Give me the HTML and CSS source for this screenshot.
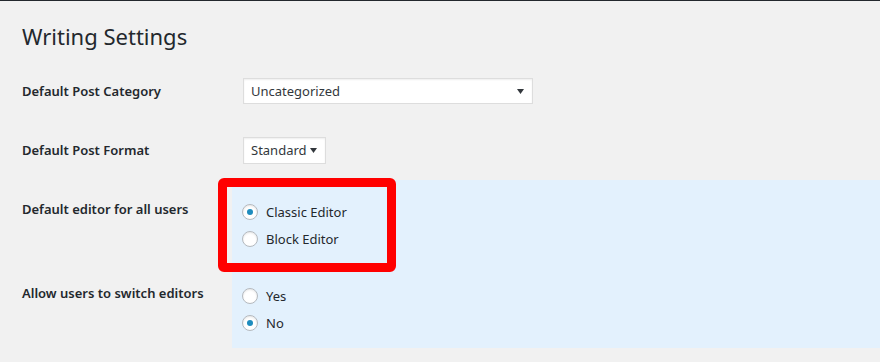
FILE: index.html
```html
<!DOCTYPE html>
<html lang="en">
<head>
  <meta charset="UTF-8">
  <title>Writing Settings</title>
  <link rel="stylesheet" href="styles.css">
</head>
<body>

  <div class="wrap">
    <h1>Writing Settings</h1>

    <div class="row row-category">
      <div class="label">Default Post Category</div>
      <div class="field">
        <div class="select select-wide">
          <span>Uncategorized</span>
          <svg class="arrow" width="7" height="5" viewBox="0 0 7 5"><path d="M0 0H7L3.5 5Z" fill="#32373c"/></svg>
        </div>
      </div>
    </div>

    <div class="row row-format">
      <div class="label">Default Post Format</div>
      <div class="field">
        <div class="select select-small">
          <span>Standard</span>
          <svg class="arrow" width="7" height="5" viewBox="0 0 7 5"><path d="M0 0H7L3.5 5Z" fill="#32373c"/></svg>
        </div>
      </div>
    </div>

    <div class="row row-editor">
      <div class="label">Default editor for all users</div>
      <div class="field highlight">
        <label class="option"><span class="radio checked"></span>Classic Editor</label>
        <label class="option"><span class="radio"></span>Block Editor</label>
        <div class="callout"></div>
      </div>
    </div>

    <div class="row row-switch">
      <div class="label">Allow users to switch editors</div>
      <div class="field highlight">
        <label class="option"><span class="radio"></span>Yes</label>
        <label class="option"><span class="radio checked"></span>No</label>
      </div>
    </div>
  </div>

</body>
</html>
```

FILE: styles.css
```css
body {
  margin: 0;
  background: #f1f1f1;
  border-top: 1px solid #23282d;
  color: #23282d;
  font-family: 'Noto Sans', 'Open Sans', sans-serif;
  font-size: 13px;
  height: 361px;
  overflow: hidden;
}

.wrap {
  padding-left: 22px;
}

h1 {
  margin: 0;
  padding: 21px 0 0;
  height: 40px;
  font-size: 22px;
  font-weight: 400;
  line-height: 29px;
}

.row {
  display: flex;
}

.label {
  width: 210px;
  flex-shrink: 0;
  font-weight: 600;
  line-height: 20px;
}

.field {
  flex: 1;
  padding-left: 10px;
}

.row-category {
  height: 58px;
  align-items: center;
}

.row-format {
  height: 60px;
  align-items: center;
}

.select {
  display: flex;
  align-items: center;
  justify-content: space-between;
  box-sizing: border-box;
  margin-left: 1px;
  background: #fff;
  border: 1px solid #ddd;
  box-shadow: inset 0 1px 2px rgba(0, 0, 0, 0.07);
  padding: 0 8px 0 7px;
  color: #32373c;
}

.select-wide {
  width: 290px;
  height: 26px;
}

.select-small {
  width: 83px;
  height: 27px;
}

.row-editor .label {
  padding-top: 19px;
}

.row-editor .field {
  padding-top: 18px;
  height: 90px;
  box-sizing: border-box;
  position: relative;
}

.row-switch .label {
  padding-top: 13px;
}

.row-switch .field {
  padding-top: 12px;
  height: 78px;
  box-sizing: border-box;
}

.highlight {
  background: #e3f1fd;
}

.option {
  display: flex;
  align-items: center;
  height: 27px;
  color: #23282d;
}

.radio {
  position: relative;
  width: 16px;
  height: 16px;
  box-sizing: border-box;
  border: 1px solid #b4b9be;
  border-radius: 50%;
  background: #fff;
  box-shadow: inset 0 1px 2px rgba(0, 0, 0, 0.1);
  margin-right: 8px;
}

.radio.checked::after {
  content: "";
  position: absolute;
  left: 4px;
  top: 4px;
  width: 6px;
  height: 6px;
  border-radius: 50%;
  background: #1e8cbe;
}

.callout {
  position: absolute;
  left: -14px;
  top: -2px;
  width: 178px;
  height: 94px;
  box-sizing: border-box;
  border: 9px solid #ff0000;
  border-radius: 6px;
}
```
